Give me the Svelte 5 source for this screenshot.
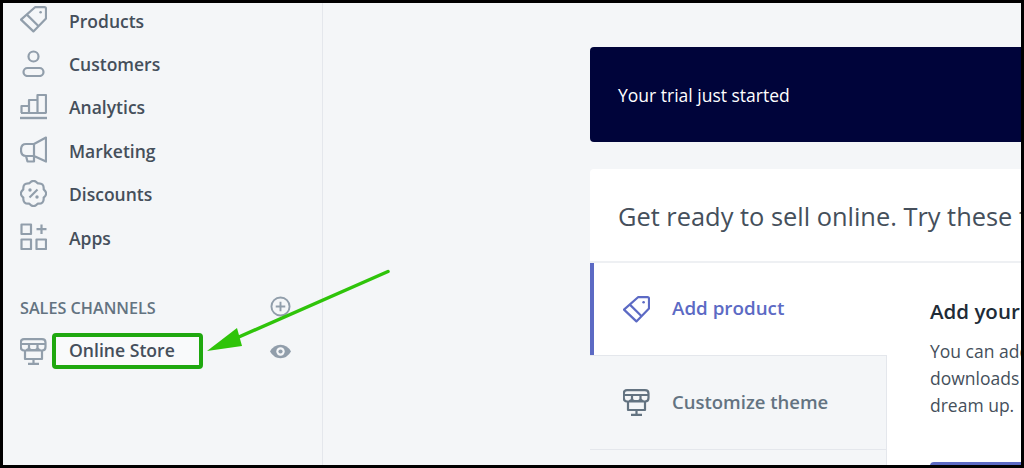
<script lang="ts">
	const nav = ['Products', 'Customers', 'Analytics', 'Marketing', 'Discounts', 'Apps'];

	// Scalloped badge outline for the discounts icon: eight bumps round the centre.
	const badge = Array.from({ length: 8 }, (_, i) => {
		const at = (a: number, r: number) =>
			`${(13.5 + r * Math.cos(a)).toFixed(2)} ${(13.5 + r * Math.sin(a)).toFixed(2)}`;
		const step = Math.PI / 4;
		const a = i * step - Math.PI / 8;
		return `${i === 0 ? 'M' + at(a, 11) : ''}Q${at(a + step / 2, 15.2)} ${at(a + step, 11)}`;
	}).join('') + 'Z';
</script>

{#snippet tag()}
	<svg class="icon" viewBox="0 0 27 27" aria-hidden="true">
		<path d="M15 1.200H24.600Q26 1.200 26 2.600V12.400L13.400 25.400 1 13.600Z" />
		<path d="M6.600 8.400 18.600 20.200" />
		<circle class="solid" cx="20.600" cy="6.200" r="1.300" />
	</svg>
{/snippet}

{#snippet store()}
	<svg class="icon store" viewBox="0 0 27 27" aria-hidden="true">
		<path d="M4 1.200H22Q25.500 1.200 25.500 4.500V9Q25.500 12.500 22 12.500H4Q.8 12.500.8 9V4.500Q.8 1.200 4 1.200Z" />
		<path d="M1 6H25.500M9 6V9.500Q9 12 6 12M17.500 6V9.500Q17.500 12 20.500 12M9 9.500Q9 12 11.500 12H15Q17.500 12 17.500 9.500" />
		<path d="M5 12.500V21H22V12.500M13.500 21V25M8 25.800H19" />
	</svg>
{/snippet}

{#snippet navIcon(name: string)}
	{#if name === 'Products'}
		{@render tag()}
	{:else if name === 'Customers'}
		<svg class="icon" viewBox="0 0 27 27" aria-hidden="true">
			<circle cx="13.500" cy="6.500" r="5" />
			<rect x="3.500" y="18" width="20" height="8" rx="4" />
		</svg>
	{:else if name === 'Analytics'}
		<svg class="icon" viewBox="0 0 27 27" aria-hidden="true">
			<path d="M1.500 20V13H9V20M9 20V7H17.500V20M17.500 20V2H26V20M1 20H26.500" />
			<path class="thick" d="M0 25H27" />
		</svg>
	{:else if name === 'Marketing'}
		<svg class="icon" viewBox="0 0 27 27" aria-hidden="true">
			<path d="M26 1.500 14 8H6Q1 8 1 14 1 20 6 20H14L26 25.500ZM14 8V20" />
			<path d="M6 20 7.500 25.500H14V20" />
		</svg>
	{:else if name === 'Discounts'}
		<svg class="icon" viewBox="0 0 27 27" aria-hidden="true">
			<path d={badge} />
			<path d="M9.500 17.500 17.500 9.500" />
			<circle class="solid" cx="10" cy="10" r="1.700" />
			<circle class="solid" cx="17" cy="17" r="1.700" />
		</svg>
	{:else}
		<svg class="icon" viewBox="0 0 27 27" aria-hidden="true">
			<rect x="1.500" y="1.500" width="9.500" height="9.500" />
			<rect x="1.500" y="16.500" width="9.500" height="9.500" />
			<rect x="16.500" y="16.500" width="9.500" height="9.500" />
			<path d="M21.500 1.500V11M16.500 6.200H26.500" />
		</svg>
	{/if}
{/snippet}

<div class="frame">
	<aside class="sidebar">
		<ul class="nav">
			{#each nav as name (name)}
				<li class="nav-row">
					{@render navIcon(name)}
					<span>{name}</span>
				</li>
			{/each}
		</ul>

		<div class="section-head">
			<span class="section-title">SALES CHANNELS</span>
			<svg class="side-icon" viewBox="0 0 22 22" aria-hidden="true">
				<circle cx="11" cy="11" r="9.500" />
				<path d="M11 6V16M6 11H16" />
			</svg>
		</div>

		<div class="channel">
			{@render store()}
			<span class="channel-name">Online Store</span>
			<svg class="side-icon eye" viewBox="0 0 22 22" aria-hidden="true">
				<path d="M0 11Q4 4 11 4 18 4 22 11 18 18 11 18 4 18 0 11Z" />
				<circle cx="11" cy="11" r="4.400" fill="#f4f6f8" />
				<circle cx="11" cy="11" r="2.200" />
			</svg>
		</div>
	</aside>

	<main class="main">
		<div class="banner">Your trial just started</div>

		<section class="card">
			<h2>Get ready to sell online. Try these tips to get started</h2>
			<div class="card-body">
				<div class="tabs">
					<div class="tab active">
						{@render tag()}
						<span>Add product</span>
					</div>
					<div class="tab">
						{@render store()}
						<span>Customize theme</span>
					</div>
					<div class="tab"></div>
				</div>
				<div class="detail">
					<h3>Add your first product</h3>
					<p>You can add physical items, digital<br />downloads or anything else you can<br />dream up.</p>
					<div class="btn"></div>
				</div>
			</div>
		</section>
	</main>

	<svg class="arrow" viewBox="0 0 1024 468" aria-hidden="true">
		<path d="M388 271.500 232 340" />
		<path class="head" d="M207 351 237 328 242 346Z" />
	</svg>
</div>

<style>
	:global(body) {
		margin: 0;
	}

	.frame {
		position: relative;
		box-sizing: border-box;
		display: flex;
		width: 1024px;
		height: 468px;
		overflow: hidden;
		border: 3px solid #000;
		background: #f4f6f8;
		font-family: 'Open Sans', 'Noto Sans', sans-serif;
		color: #454f5b;
	}

	.sidebar {
		flex: 0 0 320px;
		box-sizing: border-box;
		padding-left: 17px;
		border-right: 1px solid #e4e7ec;
	}
	.nav {
		list-style: none;
		margin: -5px 0 0;
		padding: 0;
	}
	.nav-row {
		display: flex;
		align-items: center;
		gap: 22px;
		height: 43.400px;
		font-size: 17.500px;
		font-weight: 600;
		line-height: 26px;
	}
	.nav-row span {
		padding-top: 2px;
	}

	.icon {
		flex: none;
		width: 27px;
		height: 27px;
		fill: none;
		stroke: #919eab;
		stroke-width: 2.200;
		stroke-linejoin: round;
	}
	.icon .solid {
		fill: currentColor;
		stroke: none;
		color: #919eab;
	}
	.icon .thick {
		stroke-width: 2.400;
	}

	.section-head {
		display: flex;
		align-items: center;
		justify-content: space-between;
		width: 271px;
		height: 24px;
		margin-top: 36px;
		font-size: 16.200px;
		font-weight: 600;
		color: #637381;
	}
	.section-title {
		padding-top: 3px;
	}
	.side-icon {
		flex: none;
		width: 21px;
		height: 21px;
		fill: none;
		stroke: #919eab;
		stroke-width: 2;
	}
	.eye {
		margin-left: auto;
		fill: #919eab;
		stroke: none;
	}

	.channel {
		display: flex;
		align-items: center;
		gap: 5px;
		width: 271px;
		margin-top: 15px;
	}
	.channel-name {
		box-sizing: border-box;
		width: 151px;
		height: 36px;
		padding-left: 13px;
		border: 4px solid #1fa80f;
		border-radius: 4px;
		background: #f9fafb;
		font-size: 17.600px;
		font-weight: 600;
		line-height: 27px;
		white-space: nowrap;
	}

	.main {
		flex: none;
		width: 700px;
		padding: 44px 0 0 267px;
	}
	.banner {
		box-sizing: border-box;
		width: 520px;
		height: 95px;
		padding-left: 28px;
		border-radius: 4px;
		background: #00043a;
		color: #fff;
		font-size: 17.500px;
		line-height: 97px;
	}

	.card {
		width: 700px;
		margin-top: 27px;
		border-radius: 4px 0 0 0;
		background: #fff;
	}
	h2 {
		box-sizing: border-box;
		height: 94px;
		margin: 0;
		padding-left: 28px;
		border-bottom: 2px solid #eef0f3;
		font-size: 25.400px;
		font-weight: 400;
		line-height: 95px;
		white-space: nowrap;
	}

	.card-body {
		display: flex;
	}
	.tabs {
		flex: 0 0 297px;
	}
	.tab {
		box-sizing: border-box;
		display: flex;
		align-items: center;
		gap: 22px;
		height: 94px;
		padding-left: 33px;
		border-top: 1px solid #e4e7ec;
		border-right: 1px solid #e4e7ec;
		background: #f4f6f8;
		color: #637381;
		font-size: 18.500px;
		font-weight: 600;
		line-height: 24px;
		white-space: nowrap;
	}
	.tab span {
		margin-bottom: 2px;
	}
	.tab .icon {
		stroke: #637381;
	}
	.tab.active {
		height: 92px;
		padding-left: 29px;
		border: 0;
		border-left: 4px solid #5c6ac4;
		background: #fff;
		color: #5c6ac4;
		font-size: 18.800px;
	}
	.tab.active .icon {
		stroke: #5c6ac4;
	}
	.tab.active .icon .solid {
		color: #5c6ac4;
	}

	.detail {
		padding: 34px 0 0 43px;
		white-space: nowrap;
	}
	h3 {
		margin: 0 0 13px;
		color: #212b36;
		font-size: 20.500px;
		font-weight: 600;
		line-height: 28px;
	}
	p {
		margin: 0;
		font-size: 17.500px;
		line-height: 27px;
	}
	.btn {
		width: 160px;
		height: 36px;
		margin-top: 43px;
		border-radius: 4px;
		background: #5c6ac4;
	}

	.arrow {
		position: absolute;
		left: -3px;
		top: -3px;
		width: 1024px;
		height: 468px;
		fill: none;
		stroke: #2fc40a;
		stroke-width: 3.500;
		stroke-linecap: round;
		pointer-events: none;
	}
	.arrow .head {
		fill: #2fc40a;
		stroke: none;
	}
</style>
